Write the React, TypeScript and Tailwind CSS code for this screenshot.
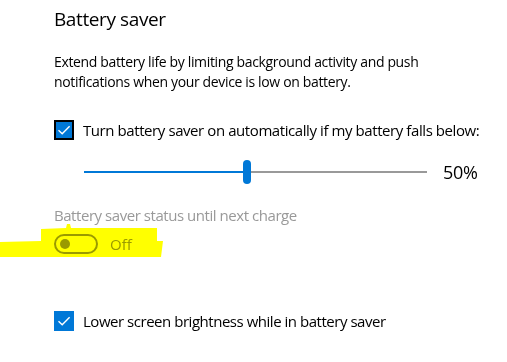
import React from "react"

function Check({ outlined }: { outlined?: boolean }) {
  return (
    <div
      className={`flex h-5 w-5 shrink-0 items-center justify-center bg-[#0078d7] ${
        outlined ? "border-2 border-black" : ""
      }`}
    >
      <svg width="14" height="14" viewBox="0 0 14 14" fill="none">
        <path d="M1.5 7.2 L5.2 10.8 L12.6 3.2" stroke="white" strokeWidth="1.4" />
      </svg>
    </div>
  )
}

export default function App() {
  return (
    <div
      className="relative h-[362px] w-[507px] overflow-hidden bg-white text-black"
      style={{ fontFamily: '"Open Sans", "Noto Sans", sans-serif' }}
    >
      <div className="pl-[54px] pt-[5px]">
        {/* Header */}
        <h1 className="text-[19px] leading-[28px] tracking-[-0.4px]">Battery saver</h1>

        <p className="mt-[19px] w-[420px] text-[14px] leading-[20px] tracking-[-0.35px]">
          Extend battery life by limiting background activity and push notifications when your device is low on battery.
        </p>

        <div className="mt-[28px] flex items-center gap-[9px]">
          <Check outlined />
          <span className="text-[15px] leading-[20px] tracking-[-0.42px]">
            Turn battery saver on automatically if my battery falls below:
          </span>
        </div>

        {/* Slider */}
        <div className="mt-[20px] flex h-[24px] items-center">
          <div className="ml-[30px] flex w-[343px] items-center">
            <div className="h-[2px] w-[159px] bg-[#0078d7]" />
            <div className="h-[24px] w-[8px] rounded-full bg-[#0078d7]" />
            <div className="h-[2px] flex-1 bg-[#999999]" />
          </div>
          <span className="ml-[16px] text-[18px] leading-[24px] tracking-[-0.3px]">50%</span>
        </div>

        <div className="mt-[21px] text-[15px] leading-[20px] tracking-[-0.45px] text-[#999999]">
          Battery saver status until next charge
        </div>

        <div className="mt-[9px] flex items-center gap-[12px]">
          <div className="flex h-[20px] w-[44px] items-center rounded-full border-2 border-[#9a9a9a] pl-[4px]">
            <div className="h-[10px] w-[10px] rounded-full bg-[#9a9a9a]" />
          </div>
          <span className="text-[15px] leading-[20px] text-[#9a9a9a]">Off</span>
        </div>

        <div className="mt-[57px] flex items-center gap-[9px]">
          <Check />
          <span className="text-[15px] leading-[20px] tracking-[-0.47px]">
            Lower screen brightness while in battery saver
          </span>
        </div>
      </div>

      {/* Marker highlight */}
      <svg
        className="pointer-events-none absolute left-0 top-0 mix-blend-multiply"
        width="507"
        height="362"
      >
        <path
          d="M41 229 L66 228 L67 224 L70 224 L71 228 L157 228 L157 241 L163 241 L161 257 L0 257 L0 242 L41 241 Z"
          fill="#ffff00"
        />
      </svg>
    </div>
  )
}
